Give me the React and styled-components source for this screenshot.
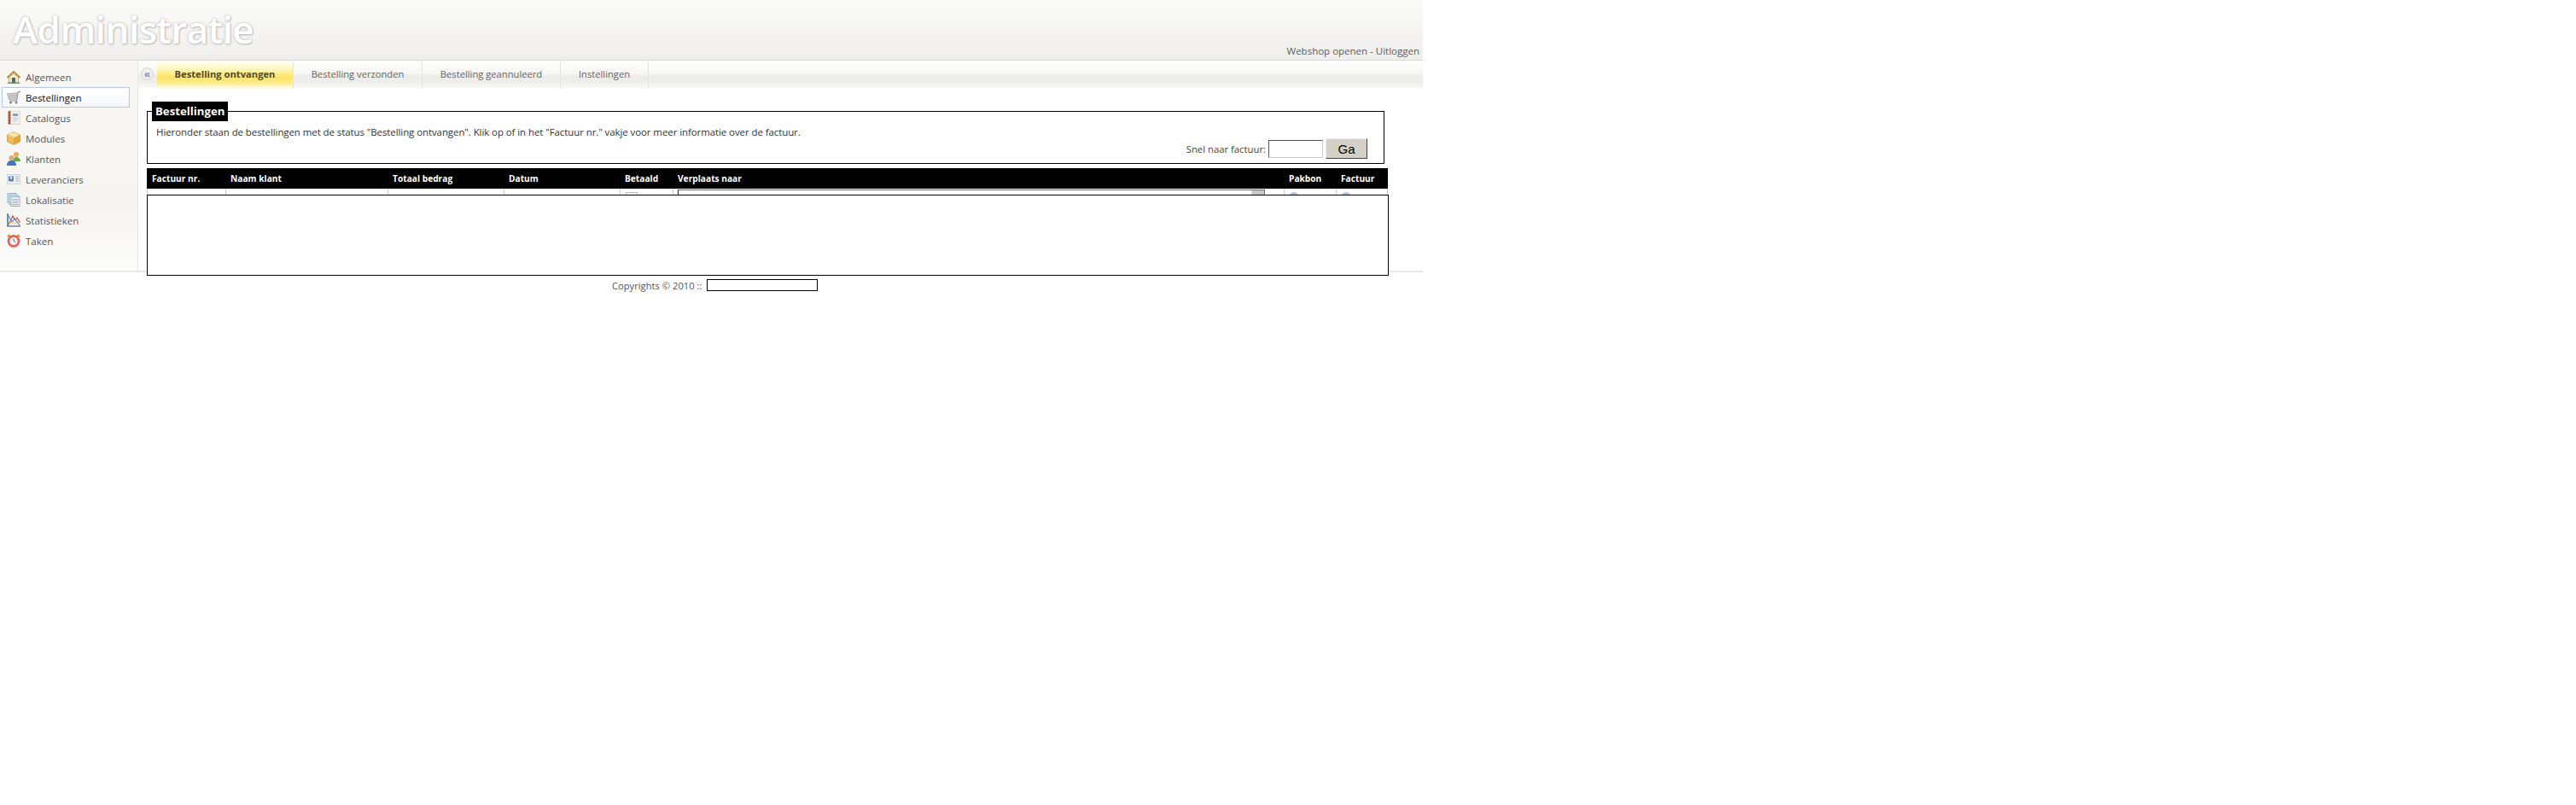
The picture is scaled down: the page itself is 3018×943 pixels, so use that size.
import React from 'react';
import styled, { createGlobalStyle } from 'styled-components';

const Global = createGlobalStyle`
  html, body { margin: 0; padding: 0; background: #fff; }
  body { font-family: "Open Sans", "Noto Sans", sans-serif; font-size: 12px; color: #4c4c4c; }
  * { box-sizing: border-box; }
`;

const Page = styled.div`
  width: 1667px;
`;

const Header = styled.header`
  height: 71px;
  display: flex;
  justify-content: space-between;
  align-items: flex-start;
  background: linear-gradient(#fbfbfa, #efeeec);
  border-bottom: 1px solid #d8d8d6;
  padding: 0 4px 0 15px;
`;

const Title = styled.h1`
  margin: 5px 0 0;
  font-size: 44px;
  line-height: 58px;
  letter-spacing: -0.55px;
  font-weight: 600;
  color: #fff;
  text-shadow: 0 0 3px #b5b5b5, 1px 1px 2px #c2c2c2;
`;

const HeaderLinks = styled.div`
  margin-top: 50px;
  font-size: 11.5px;
  line-height: 20px;
  color: #5c5c5c;
`;

const Body = styled.div`
  display: flex;
  height: 248px;
  border-bottom: 2px solid #e8e8e6;
`;

const Sidebar = styled.nav`
  width: 162px;
  flex: none;
  padding: 7px 0 0 2px;
  background: linear-gradient(#f8f7f4, #f6f5f2 70%, #fcfcfb);
  border-right: 1px solid #e6e6e4;
`;

const MenuItem = styled.a`
  display: flex;
  align-items: center;
  gap: 6px;
  width: 150px;
  height: 24px;
  padding-left: 5px;
  font-size: 11.5px;
  color: ${({ $active }) => ($active ? '#111' : '#555')};
  border: 1px solid ${({ $active }) => ($active ? '#b4c8e2' : 'transparent')};
  background: ${({ $active }) => ($active ? 'linear-gradient(#fff, #f4f7fb)' : 'none')};
  svg { flex: none; }
`;

const Main = styled.main`
  position: relative;
  flex: 1;
  min-width: 0;
  background: #fff;
`;

const TabBar = styled.div`
  height: 33px;
  display: flex;
  align-items: stretch;
  padding-left: 22px;
  background: linear-gradient(#fdfdfc 0%, #f7f7f5 45%, #ebebe8 55%, #eeeeec 75%, #fbfbfa 100%);
`;

const Collapse = styled.button`
  position: absolute;
  left: 3px;
  top: 8px;
  width: 15px;
  height: 15px;
  padding: 0;
  border: 1px solid #d4d4d4;
  border-radius: 50%;
  background: #efefef;
  color: #8794a6;
  font: 700 12px/11px "Open Sans", sans-serif;
`;

const Tab = styled.a`
  display: flex;
  align-items: center;
  justify-content: center;
  width: ${({ $w }) => $w}px;
  font-size: 11.2px;
  padding-bottom: 2px;
  font-weight: ${({ $active }) => ($active ? 700 : 400)};
  color: ${({ $active }) => ($active ? '#4e4a2c' : '#666')};
  border-right: 1px solid #e4e4e2;
  background: ${({ $active }) =>
    $active ? 'linear-gradient(#fffff6 0%, #fef6bd 30%, #fde463 60%, #fdeb8c 78%, #fffde8 100%)' : 'none'};
`;

const Content = styled.div`
  padding: 15px 0 0 10px;
`;

const Box = styled.fieldset`
  width: 1450px;
  height: 73px;
  margin: 0;
  padding: 0 0 0 10px;
  border: 1px solid #000;
  min-inline-size: 0;
  display: block;
`;

const Legend = styled.legend`
  height: 23px;
  margin-left: -5px;
  padding: 0 4px;
  background: #000;
  color: #fff;
  font-size: 13.2px;
  line-height: 23px;
  font-weight: 700;
`;

const Intro = styled.p`
  margin: 1px 0 0;
  font-size: 11.5px;
  letter-spacing: -0.09px;
  line-height: 24px;
  color: #333;
`;

const Search = styled.form`
  display: flex;
  justify-content: flex-end;
  align-items: center;
  gap: 3px;
  margin: -5px 19px 0 0;
  font-size: 11.3px;
  color: #444;
`;

const SearchInput = styled.input`
  width: 64px;
  height: 21px;
  padding: 0;
  background: #fff;
  border: 1px solid;
  border-color: #555 #ccc #ccc #555;
`;

const GoButton = styled.button`
  width: 49px;
  height: 24px;
  padding: 0;
  background: #d4d0c8;
  border: 1px solid;
  border-color: #eee #444 #444 #eee;
  color: #000;
  font: 15px "Liberation Sans", Arial, sans-serif;
`;

const columns = '92px 190px 136px 136px 62px 716px 61px 61px';

const TableHead = styled.div`
  display: grid;
  grid-template-columns: ${columns};
  width: 1454px;
  height: 24px;
  margin-top: 5px;
  background: #000;
`;

const HeadCell = styled.div`
  padding-left: 6px;
  color: #fff;
  font-size: 10.2px;
  font-weight: 700;
  line-height: 24px;
`;

const TableRow = styled.div`
  display: grid;
  grid-template-columns: ${columns};
  width: 1454px;
  height: 8px;
  overflow: hidden;
`;

const Cell = styled.div`
  position: relative;
  border-left: 1px solid #c8c8c8;
  &:last-child { border-right: 1px solid #c8c8c8; }
`;

const CheckBox = styled.span`
  display: block;
  width: 14px;
  height: 14px;
  margin: 4px 0 0 6px;
  border: 1px solid #b8b8b8;
  background: #fafafa;
`;

const SelectBox = styled.div`
  display: flex;
  justify-content: flex-end;
  width: 688px;
  height: 20px;
  margin: 1px 0 0 5px;
  border: 1px solid;
  border-color: #666 #666 #ccc #222;
`;

const SelectArrow = styled.span`
  width: 15px;
  background: #c8c8c8;
  border-left: 1px solid #ddd;
`;

const RoundIcon = styled.span`
  display: block;
  width: 12px;
  height: 12px;
  margin: 4px 0 0 5px;
  border-radius: 50%;
  background: #a9c4e4;
`;

const Overlay = styled.div`
  position: absolute;
  left: 10px;
  top: 157px;
  width: 1455px;
  height: 95px;
  background: #fff;
  border: 1px solid #000;
`;

const Footer = styled.footer`
  display: flex;
  align-items: center;
  gap: 6px;
  height: 16px;
  margin-top: 7px;
  padding-left: 717px;
  font-size: 11.2px;
  color: #555;
`;

const FooterSlot = styled.span`
  display: block;
  width: 130px;
  height: 14px;
  border: 1px solid #000;
`;

const Svg = ({ children }) => (
  <svg width="16" height="16" viewBox="0 0 16 16">{children}</svg>
);

const HomeIcon = () => (
  <Svg>
    <path d="M2.500 8v7h11V8L8 3z" fill="#f1e6cf" stroke="#a98a55" strokeWidth=".6" />
    <path d="M0 8.500 8 1l8 7.500-1.300.8L8 3.400 1.300 9.300z" fill="#d99a3e" stroke="#8f6a2c" strokeWidth=".5" />
    <rect x="6" y="9" width="4" height="6" fill="#4f6f62" />
    <path d="M1 14.600h14V16H1z" fill="#5c9a70" />
  </Svg>
);

const CartIcon = () => (
  <Svg>
    <path d="M16 1 13 2l-1.500 10H3" fill="none" stroke="#8f8f8f" strokeWidth="1.200" />
    <path d="M.5 3.500 12.500 3 11.500 10 2.500 10.500z" fill="#d8d8d8" stroke="#9a9a9a" strokeWidth=".7" />
    <path d="M1 5.500h11M2 7.500h10M4 3.500l.5 7M7 3.300v7M10 3.200l-.4 7" stroke="#a0a0a0" strokeWidth=".5" />
    <circle cx="4.500" cy="14" r="1.500" fill="#8a8a8a" />
    <circle cx="11" cy="14" r="1.500" fill="#8a8a8a" />
  </Svg>
);

const BookIcon = () => (
  <Svg>
    <rect x="2" y="0" width="13" height="15.500" fill="#f4f2ec" stroke="#d0b49a" strokeWidth=".6" />
    <rect x="2" y="0" width="2.500" height="15.500" fill="#b86a4c" />
    <path d="M1 2h3M1 5h3M1 8h3M1 11h3M1 14h3" stroke="#6e3a28" strokeWidth=".8" />
    <path d="M7 3h6v3H7z" fill="#7aa0d6" />
    <path d="M7 8h6M7 10h6M7 12h4" stroke="#a9bcd8" strokeWidth=".8" />
  </Svg>
);

const BoxIcon = () => (
  <Svg>
    <path d="M8 .5 15.500 4v8L8 15.500.5 12V4z" fill="#eebb55" stroke="#b9842c" strokeWidth=".6" />
    <path d="M.5 4 8 7.500 15.500 4 8 .5z" fill="#f9dc93" />
    <path d="M8 7.500v8L15.500 12V4z" fill="#e0a644" />
    <path d="m4 2.300 7.500 3.500" stroke="#fff3d0" strokeWidth="1.200" />
  </Svg>
);

const UsersIcon = () => (
  <Svg>
    <circle cx="11" cy="3" r="3" fill="#e8a95b" />
    <path d="M7 11c0-3 2-5 4-5s5 1.500 5 5z" fill="#6ba84a" />
    <circle cx="5.500" cy="7" r="3" fill="#e2a96e" />
    <path d="M0 16c0-4 2-6 5.500-6s5.500 2 5.500 6z" fill="#3f78c0" />
  </Svg>
);

const CardIcon = () => (
  <Svg>
    <rect x=".5" y="2.500" width="15" height="11" fill="#eef2f7" stroke="#b9c5d6" strokeWidth=".7" />
    <rect x="2" y="4.500" width="6" height="6" fill="#5f7ea8" />
    <circle cx="5" cy="6.500" r="1.400" fill="#dbe3ee" />
    <path d="M10 5h4M10 7.500h4M10 10h4" stroke="#8ea2bf" strokeWidth=".9" />
  </Svg>
);

const DocsIcon = () => (
  <Svg>
    <rect x="1" y="0.500" width="10" height="11" fill="#dbe6f3" stroke="#7d9cc2" strokeWidth=".7" />
    <rect x="3" y="2.500" width="10" height="11" fill="#e6eef7" stroke="#7d9cc2" strokeWidth=".7" />
    <rect x="5" y="4.500" width="10" height="11" fill="#f3f7fb" stroke="#6d8fb8" strokeWidth=".7" />
    <path d="M6.500 7.500h7M6.500 9.500h7M6.500 11.500h7M6.500 13.500h7" stroke="#7d9cc2" strokeWidth=".8" />
  </Svg>
);

const ChartIcon = () => (
  <Svg>
    <path d="M1 0v15h15" fill="none" stroke="#1d4f78" strokeWidth="1.200" />
    <path d="M1.500 14 7 3l3 5 2-3 3.500 6" fill="none" stroke="#d9483f" strokeWidth="1.100" />
    <path d="M1.500 2 6 10l3-4 6 8" fill="none" stroke="#4a7fc0" strokeWidth="1.100" />
    <path d="M2 13l4-3 3 2 5-3" fill="none" stroke="#e8b04c" strokeWidth="1" />
  </Svg>
);

const ClockIcon = () => (
  <Svg>
    <circle cx="2.500" cy="2.500" r="2" fill="#e8a23c" />
    <circle cx="13.500" cy="2.500" r="2" fill="#e8a23c" />
    <circle cx="8" cy="8.500" r="7" fill="#e8695a" stroke="#c4473a" strokeWidth=".6" />
    <circle cx="8" cy="8.500" r="4.500" fill="#fbfbfb" />
    <path d="M8 5.500v3l2.200 1" fill="none" stroke="#4a5f85" strokeWidth="1" />
  </Svg>
);

const menu = [
  ['Algemeen', HomeIcon],
  ['Bestellingen', CartIcon, true],
  ['Catalogus', BookIcon],
  ['Modules', BoxIcon],
  ['Klanten', UsersIcon],
  ['Leveranciers', CardIcon],
  ['Lokalisatie', DocsIcon],
  ['Statistieken', ChartIcon],
  ['Taken', ClockIcon],
];

const tabs = [
  ['Bestelling ontvangen', 160, true],
  ['Bestelling verzonden', 151],
  ['Bestelling geannuleerd', 162],
  ['Instellingen', 103],
];

const headers = ['Factuur nr.', 'Naam klant', 'Totaal bedrag', 'Datum', 'Betaald', 'Verplaats naar', 'Pakbon', 'Factuur'];

export default function App() {
  return (
    <Page>
      <Global />
      <Header>
        <Title>Administratie</Title>
        <HeaderLinks>Webshop openen - Uitloggen</HeaderLinks>
      </Header>
      <Body>
        <Sidebar>
          {menu.map(([label, Icon, active]) => (
            <MenuItem key={label} $active={active}>
              <Icon />
              {label}
            </MenuItem>
          ))}
        </Sidebar>
        <Main>
          <Collapse>«</Collapse>
          <TabBar>
            {tabs.map(([label, w, active]) => (
              <Tab key={label} $w={w} $active={active}>{label}</Tab>
            ))}
          </TabBar>
          <Content>
            <Box>
              <Legend>Bestellingen</Legend>
              <Intro>
                Hieronder staan de bestellingen met de status "Bestelling ontvangen". Klik op of in het "Factuur nr." vakje voor meer informatie over de factuur.
              </Intro>
              <Search>
                Snel naar factuur:
                <SearchInput />
                <GoButton type="button">Ga</GoButton>
              </Search>
            </Box>
            <TableHead>
              {headers.map((h) => <HeadCell key={h}>{h}</HeadCell>)}
            </TableHead>
            <TableRow>
              <Cell />
              <Cell />
              <Cell />
              <Cell />
              <Cell><CheckBox /></Cell>
              <Cell><SelectBox><SelectArrow /></SelectBox></Cell>
              <Cell><RoundIcon /></Cell>
              <Cell><RoundIcon /></Cell>
            </TableRow>
          </Content>
          <Overlay />
        </Main>
      </Body>
      <Footer>
        Copyrights © 2010 ::
        <FooterSlot />
      </Footer>
    </Page>
  );
}
